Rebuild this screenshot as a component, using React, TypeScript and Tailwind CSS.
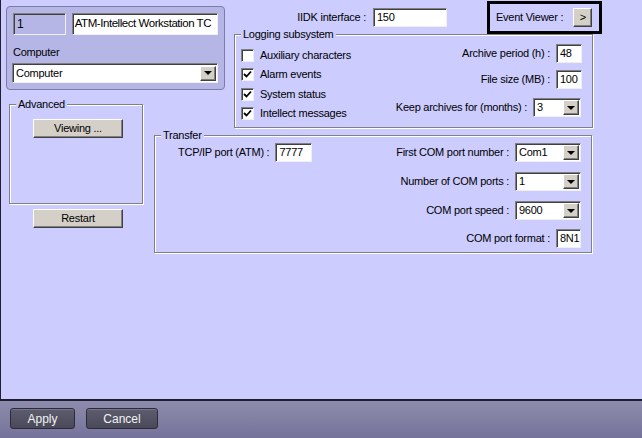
import React from 'react';

const sunken =
  'border border-t-[#808080] border-l-[#808080] border-b-[#f0f0f0] border-r-[#f0f0f0] shadow-[inset_1px_1px_0_#404040]';
const raised =
  'bg-[#d4d0c8] border border-t-[#ffffff] border-l-[#ffffff] border-b-[#404040] border-r-[#404040] shadow-[inset_-1px_-1px_0_#808080]';
const etched = 'border border-[#808080] shadow-[1px_1px_0_#ffffff,inset_1px_1px_0_#ffffff]';

const Field = ({ value, className = '' }: { value: string; className?: string }) => (
  <div className={`${sunken} bg-white flex items-center pl-[3px] h-[19px] ${className}`}>{value}</div>
);

const Arrow = () => (
  <div className={`${raised} w-[16px] h-[15px] flex items-center justify-center`}>
    <div className="w-0 h-0 border-l-[4px] border-r-[4px] border-t-[4px] border-l-transparent border-r-transparent border-t-black" />
  </div>
);

const Select = ({ value, className = '' }: { value: string; className?: string }) => (
  <div className={`${sunken} bg-white flex items-center justify-between pl-[3px] pr-[1px] h-[19px] ${className}`}>
    <span>{value}</span>
    <Arrow />
  </div>
);

const Check = ({ label, checked }: { label: string; checked: boolean }) => (
  <div className="flex items-center gap-[6px] h-[13px]">
    <div className={`${sunken} bg-white w-[13px] h-[13px] flex items-center justify-center`}>
      {checked && (
        <svg width="9" height="9" viewBox="0 0 9 9">
          <path d="M1 4 L3.5 6.5 L8 1.5" stroke="#000" strokeWidth="1.8" fill="none" />
        </svg>
      )}
    </div>
    <span>{label}</span>
  </div>
);

const Title = ({ text }: { text: string }) => (
  <span className="-mt-[7px] ml-[6px] px-[2px] w-fit leading-[13px] bg-[#ccccfe]">{text}</span>
);

const LabelRow = ({ label, children, className = '' }: { label: string; children: React.ReactNode; className?: string }) => (
  <div className={`flex items-center justify-end gap-[6px] ${className}`}>
    <span>{label}</span>
    {children}
  </div>
);

export default function App() {
  return (
    <div className="w-[642px] h-[438px] flex flex-col bg-[#ccccfe] text-black text-[11px] tracking-[-0.25px] whitespace-nowrap font-['Liberation_Sans',Arial,sans-serif] overflow-hidden">
      <div className="h-[399px] flex border-l border-[#202030]">
        {/* left column */}
        <div className="w-[233px] pl-[5px] flex flex-col">
          <div className="mt-[6px] w-[219px] h-[84px] rounded-[4px] border border-[#7c7ca4] bg-[#b6b6e6] pt-[6px] px-[6px] flex flex-col">
            <div className="flex">
              <div className={`${sunken} bg-[#b6b6e6] w-[53px] h-[22px] pl-[3px] flex items-center text-[12px]`}>1</div>
              <div className={`${sunken} bg-white w-[147px] h-[22px] ml-[6px] pl-[2px] flex items-center overflow-hidden text-[11.5px] tracking-[-0.45px]`}>
                ATM-Intellect Workstation TC
              </div>
            </div>
            <span className="mt-[11px] leading-[13px]">Computer</span>
            <Select value="Computer" className="mt-[4px] -ml-[1px] w-[206px] h-[20px]" />
          </div>

          <div className={`${etched} mt-[14px] ml-[3px] w-[134px] h-[100px] flex flex-col`}>
            <Title text="Advanced" />
            <button className={`${raised} mt-[8px] ml-[23px] w-[90px] h-[19px] text-center`}>Viewing ...</button>
          </div>

          <button className={`${raised} mt-[5px] ml-[27px] w-[90px] h-[19px] text-center`}>Restart</button>
        </div>

        {/* right column */}
        <div className="flex-1 flex flex-col">
          <div className="h-[34px] flex items-start">
            <div className="w-[213px] pt-[8px] flex items-center justify-end gap-[7px]">
              <span>IIDK interface :</span>
              <Field value="150" className="w-[74px]" />
            </div>
            <div className="ml-[40px] mt-[1px] w-[115px] h-[33px] border-[3px] border-black flex items-center pl-[6px]">
              <span>Event Viewer :</span>
              <button className={`${raised} ml-[10px] w-[19px] h-[19px] flex items-center justify-center`}>&gt;</button>
            </div>
          </div>

          <div className={`${etched} w-[359px] h-[94px] flex flex-col`}>
            <Title text="Logging subsystem" />
            <div className="flex justify-between">
              <div className="pl-[6px] pt-[8px] flex flex-col">
                <Check label="Auxiliary characters" checked={false} />
                <div className="mt-[6px]"><Check label="Alarm events" checked /></div>
                <div className="mt-[7px]"><Check label="System status" checked /></div>
                <div className="mt-[6px]"><Check label="Intellect messages" checked /></div>
              </div>
              <div className="pr-[10px] pt-[3px] flex flex-col items-end">
                <LabelRow label="Archive period (h) :">
                  <Field value="48" className="w-[26px]" />
                </LabelRow>
                <LabelRow label="File size (MB) :" className="mt-[7px]">
                  <Field value="100" className="w-[26px]" />
                </LabelRow>
                <LabelRow label="Keep archives for (months) :" className="mt-[9px] mr-[1px]">
                  <Select value="3" className="w-[48px]" />
                </LabelRow>
              </div>
            </div>
          </div>

          <div className={`${etched} mt-[7px] -ml-[80px] w-[438px] h-[118px] flex flex-col`}>
            <Title text="Transfer" />
            <div className="flex justify-between">
              <div className="pl-[23px] mt-[1px] flex items-center gap-[6px] h-[19px]">
                <span>TCP/IP port (ATM) :</span>
                <Field value="7777" className="w-[37px]" />
              </div>
              <div className="pr-[10px] mt-[1px] flex flex-col items-end">
                <LabelRow label="First COM port number :">
                  <Select value="Com1" className="w-[66px]" />
                </LabelRow>
                <LabelRow label="Number of COM ports :" className="mt-[10px]">
                  <Select value="1" className="w-[66px]" />
                </LabelRow>
                <LabelRow label="COM port speed :" className="mt-[10px]">
                  <Select value="9600" className="w-[66px]" />
                </LabelRow>
                <LabelRow label="COM port format :" className="mt-[9px]">
                  <Field value="8N1" className="w-[25px]" />
                </LabelRow>
              </div>
            </div>
          </div>
        </div>
      </div>

      {/* bottom bar */}
      <div className="flex-1 border-t-2 border-[#1e1d32] bg-gradient-to-b from-[#8e8cab] to-[#74729a] flex items-start gap-[11px] pl-[10px] pt-[7px] tracking-normal">
        <button className="w-[65px] h-[21px] rounded-[3px] border border-[#2c2b3a] bg-gradient-to-b from-[#5e5d70] to-[#4a4958] text-[#f2f2f2] text-[12px] shadow-[inset_0_1px_0_#76758a]">
          Apply
        </button>
        <button className="w-[72px] h-[21px] rounded-[3px] border border-[#2c2b3a] bg-gradient-to-b from-[#5e5d70] to-[#4a4958] text-[#f2f2f2] text-[12px] shadow-[inset_0_1px_0_#76758a]">
          Cancel
        </button>
      </div>
    </div>
  );
}
